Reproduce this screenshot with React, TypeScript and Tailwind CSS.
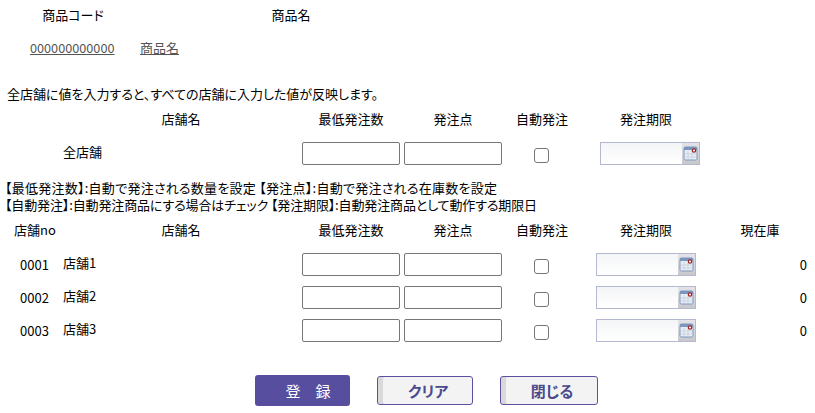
const font = { fontFamily: '"Noto Sans CJK JP", sans-serif' }

const gridCols = 'grid grid-cols-[60px_242px_102px_100px_78px_130px_100px] items-center'

function TextBox() {
  return <input type="text" className="h-[23px] w-[98px] rounded-[2px] border border-[#767676] bg-white" />
}

function CheckBox() {
  return <div className="mt-1 ml-[30px] h-[15px] w-[15px] rounded-[3px] border border-[#767676] bg-white" />
}

function DateBox({ className }: { className: string }) {
  return (
    <div className={`flex h-[23px] w-[100px] border border-[#b4b8d0] bg-gradient-to-b from-[#f4f5f7] to-white ${className}`}>
      <div className="flex-1" />
      <div className="flex w-[17px] items-center justify-center bg-gradient-to-b from-[#e4e4e8] to-[#c8c8cc]">
        <svg width="15" height="15" viewBox="0 0 15 15">
          <rect x="1" y="1" width="13" height="13" rx="1.5" fill="#e8eef6" stroke="#7b96bd" />
          <rect x="1" y="1" width="13" height="3" fill="#7b96bd" />
          <path d="M5 5v8M9 5v8M2 8h11M2 11h11" stroke="#cdd3dc" strokeWidth="1" />
          <circle cx="11" cy="4.5" r="1.7" fill="#fff" stroke="#a82020" strokeWidth="1.2" />
        </svg>
      </div>
    </div>
  )
}

function HeaderRow({ first }: { first?: string }) {
  return (
    <div className={`${gridCols} h-[20px] text-center`}>
      <div className="pl-[10px]">{first}</div>
      <div>店舗名</div>
      <div className="pr-[4px]">最低発注数</div>
      <div className="pr-[2px]">発注点</div>
      <div className="pr-[2px]">自動発注</div>
      <div className="pr-[2px]">発注期限</div>
      <div className="pr-[4px]">{first ? '現在庫' : ''}</div>
    </div>
  )
}

function ShopRow({ no, name }: { no: string; name: string }) {
  return (
    <div className={`${gridCols} h-[33px]`}>
      <div className="pl-[20px]">{no}</div>
      <div className="pl-[3px] -translate-y-[2px]">{name}</div>
      <TextBox />
      <TextBox />
      <CheckBox />
      <DateBox className="ml-[14px]" />
      <div className="pr-[5px] text-right">0</div>
    </div>
  )
}

function OutlineButton({ label, width }: { label: string; width: string }) {
  return (
    <button type="button" className={`h-[29px] ${width} rounded-[3px] border border-[#5a50a5] bg-[#f3f3f3] pl-[6px] text-[15px] font-bold text-[#4a4a8c] shadow-[inset_5px_0_0_#d9d9d9]`}>
      {label}
    </button>
  )
}

export default function App() {
  return (
    <div style={font} className="h-[413px] w-[815px] overflow-hidden bg-white text-[13px] leading-[18px] text-black [font-feature-settings:'palt']">
      <div className="flex h-[30px] items-center">
        <div className="w-[146px] text-center">商品コード</div>
        <div className="ml-[80px] w-[130px] text-center">商品名</div>
      </div>
      <div className="flex h-[36px] items-center pl-[30px] text-[#555]">
        <a className="w-[110px] text-[12.7px] underline">000000000000</a>
        <a className="underline">商品名</a>
      </div>
      <div className="mt-[19px] pl-[7px]">全店舗に値を入力すると、すべての店舗に入力した値が反映します。</div>
      <div className="mt-[6px]">
        <HeaderRow />
      </div>
      <div className={`${gridCols} mt-[6px] h-[36px]`}>
        <div />
        <div className="pl-[3px] -translate-y-[1px]">全店舗</div>
        <TextBox />
        <TextBox />
        <CheckBox />
        <DateBox className="ml-[18px]" />
        <div />
      </div>
      <div className="mt-[8px] pl-[5px] leading-[17px]">
        <div className="tracking-[0.25px]">【最低発注数】:自動で発注される数量を設定 【発注点】:自動で発注される在庫数を設定</div>
        <div className="tracking-[-0.13px]">【自動発注】:自動発注商品にする場合はチェック 【発注期限】:自動発注商品として動作する期限日</div>
      </div>
      <div className="mt-[7px]">
        <HeaderRow first="店舗no" />
      </div>
      <div className="mt-[8px]">
        <ShopRow no="0001" name="店舗1" />
        <ShopRow no="0002" name="店舗2" />
        <ShopRow no="0003" name="店舗3" />
      </div>
      <div className="mt-[28px] flex items-center pl-[255px]">
        <button type="button" className="h-[31px] w-[95px] rounded-[3px] bg-[#574ea0] pl-[11px] text-[15px] text-white">登　録</button>
        <div className="ml-[27px]"><OutlineButton label="クリア" width="w-[96px]" /></div>
        <div className="ml-[27px]"><OutlineButton label="閉じる" width="w-[98px]" /></div>
      </div>
    </div>
  )
}
